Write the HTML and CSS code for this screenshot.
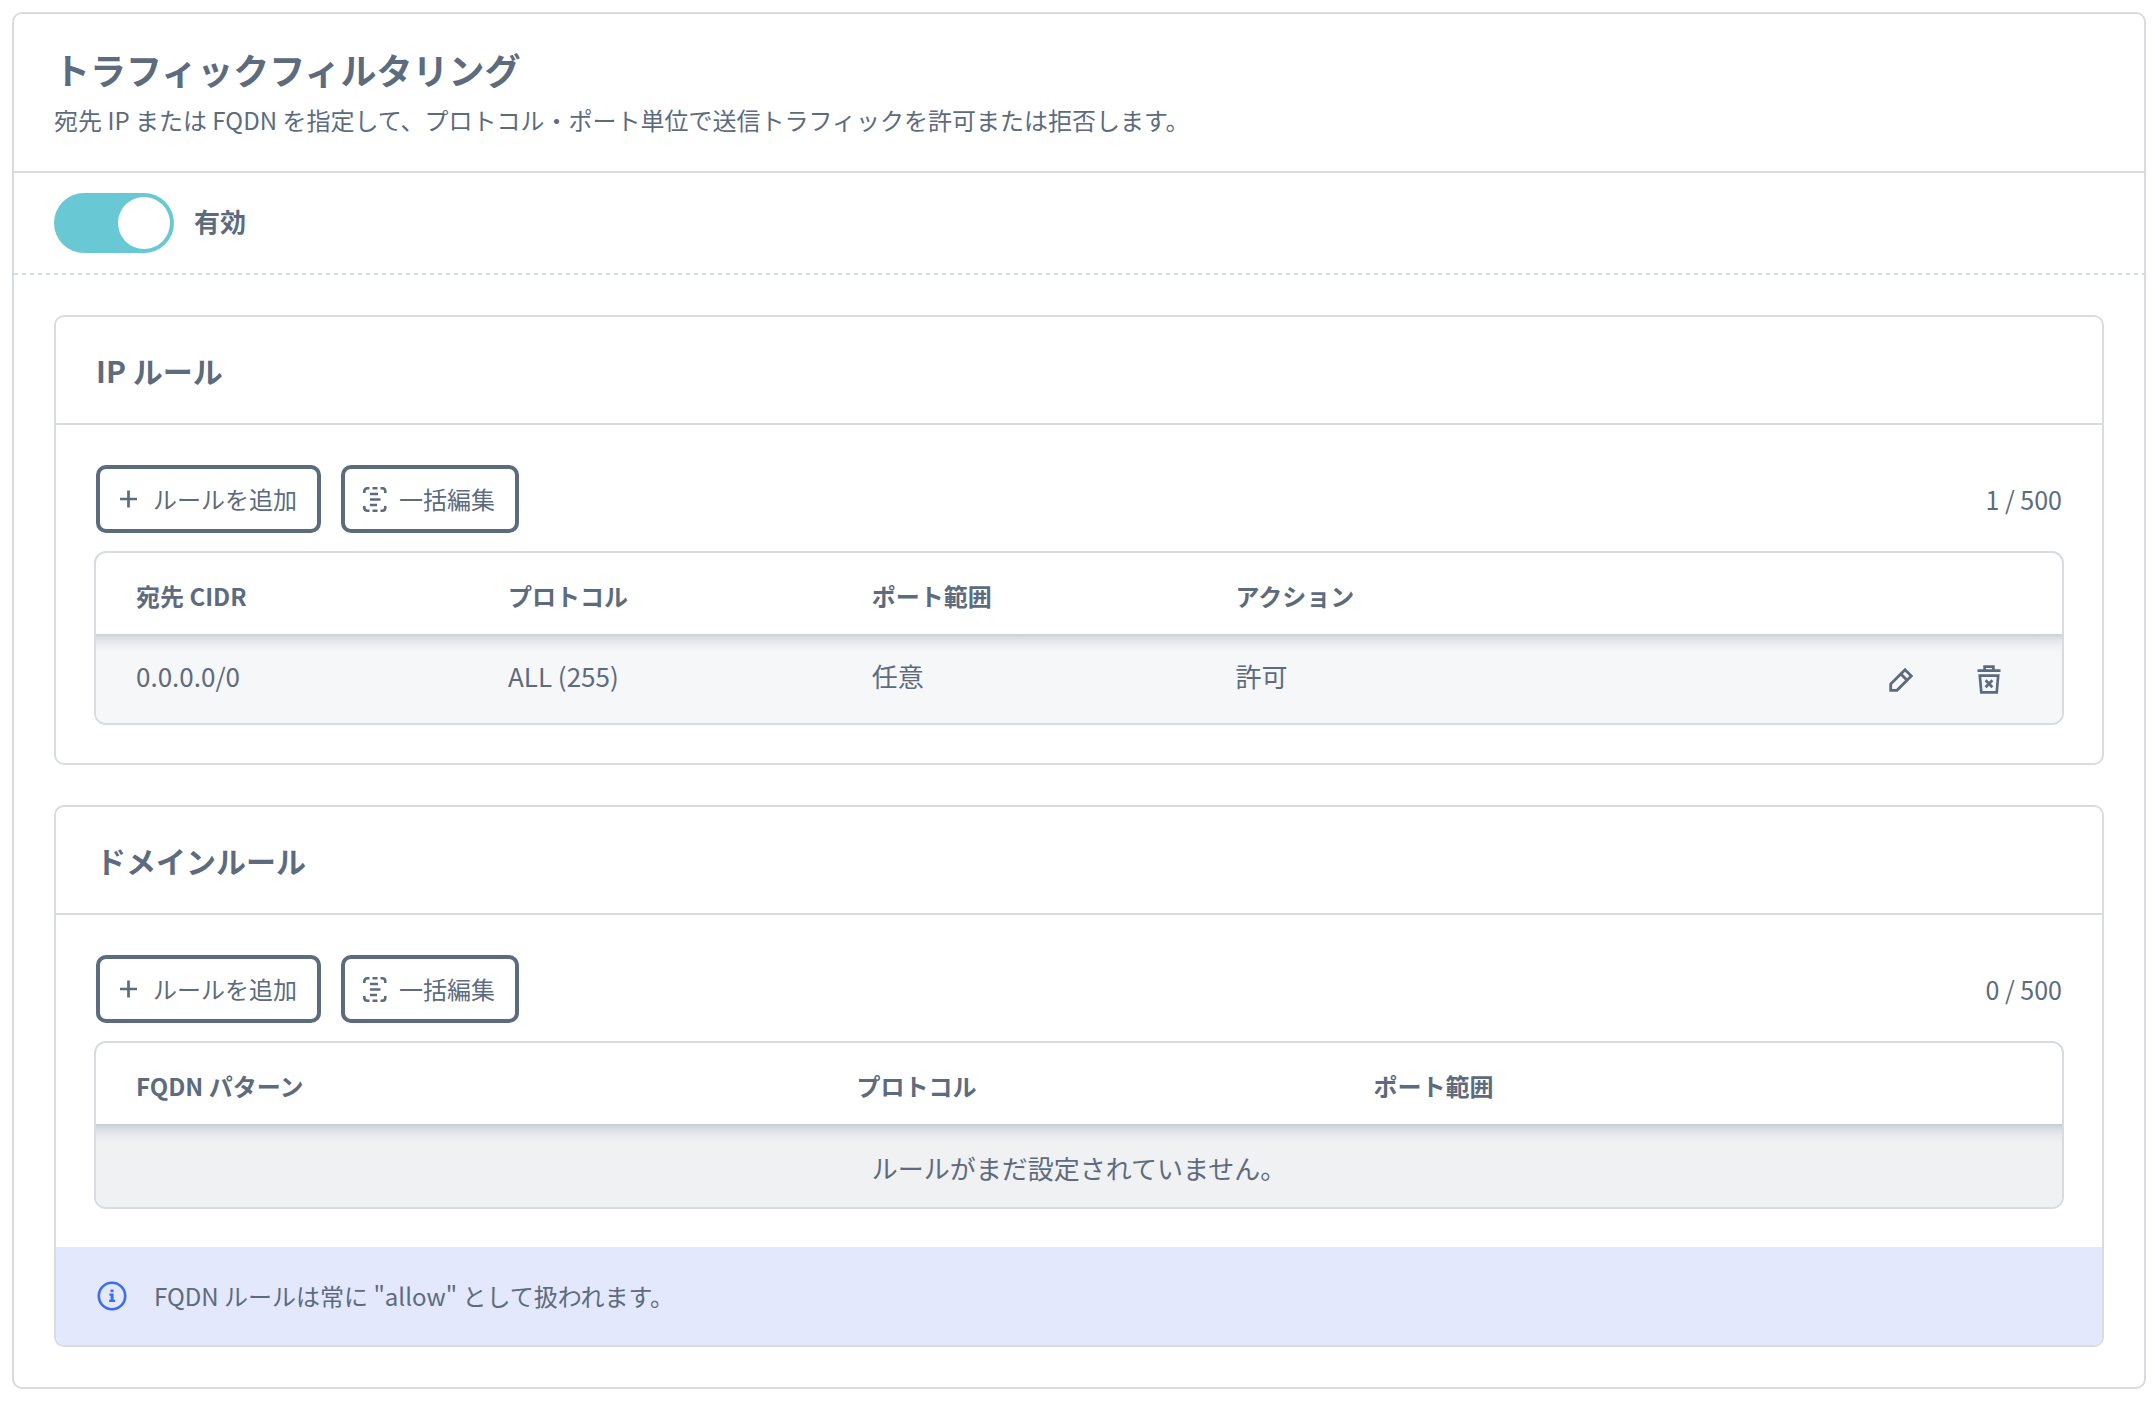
FILE: index.html
```html
<!DOCTYPE html>
<html lang="ja">
<head>
<meta charset="utf-8">
<title>トラフィックフィルタリング</title>
<link rel="stylesheet" href="styles.css">
</head>
<body>

<!-- shared icons -->
<svg class="sprite" aria-hidden="true">
    <symbol id="i-plus" viewBox="0 0 25 28">
        <path d="M4 14h17M12.5 5.5v17" fill="none" stroke="currentColor" stroke-width="2.7"/>
    </symbol>
    <symbol id="i-bulk" viewBox="0 0 26 28">
        <g fill="none" stroke="currentColor" stroke-width="2.6">
            <path d="M3.300 8V6.500Q3.300 3.300 6.500 3.300H8.500M11.500 3.300h5M19.500 3.300H21.500Q24.300 3.300 24.300 6.500V8M3.300 21v1.500q0 3.200 3.200 3.200H8.500M11.500 25.700h5M19.500 25.700H21.500q2.800 0 2.800-3.200V21"/>
            <path d="M9 9h8M9 14.500h10.500M9 20h7"/>
        </g>
    </symbol>
</svg>

<main class="card">
    <header class="card-head">
        <h1>トラフィックフィルタリング</h1>
        <p>宛先 IP または FQDN を指定して、プロトコル・ポート単位で送信トラフィックを許可または拒否します。</p>
    </header>

    <div class="enable">
        <input type="checkbox" class="switch" id="enabled" checked>
        <label for="enabled">有効</label>
    </div>

    <div class="card-body">
        <section class="panel">
            <h2>IP ルール</h2>
            <div class="panel-body">
                <div class="toolbar">
                    <button type="button" class="btn"><svg class="plus"><use href="#i-plus"/></svg>ルールを追加</button>
                    <button type="button" class="btn"><svg class="bulk"><use href="#i-bulk"/></svg>一括編集</button>
                    <span class="count">1 / 500</span>
                </div>
                <div class="table-wrap">
                    <table class="ip-table">
                        <colgroup><col class="c-cidr"><col class="c-proto"><col class="c-port"><col class="c-action"><col class="c-tools"></colgroup>
                        <thead>
                            <tr><th>宛先 CIDR</th><th>プロトコル</th><th>ポート範囲</th><th>アクション</th><th></th></tr>
                        </thead>
                        <tbody>
                            <tr>
                                <td>0.0.0.0/0</td>
                                <td>ALL (255)</td>
                                <td>任意</td>
                                <td>許可</td>
                                <td class="tools">
                                    <div class="tool-list">
                                        <button type="button" class="icon-btn" aria-label="編集">
                                            <svg viewBox="0 0 32 32" fill="none" stroke="currentColor" stroke-width="2.8"><path d="M5.700 26.300V20L20 5.700l6.300 6.300L12 26.300zM15.800 9.900l6.300 6.300"/></svg>
                                        </button>
                                        <button type="button" class="icon-btn" aria-label="削除">
                                            <svg viewBox="0 0 32 32" fill="none" stroke="currentColor" stroke-width="2.7"><path d="M4.500 6.600h23M11.600 6.600V2.700h8.800v3.900M6.800 11.600h18.400l-1.500 16.800H8.300zM12.600 16.300l6.800 7M19.400 16.300l-6.800 7"/></svg>
                                        </button>
                                    </div>
                                </td>
                            </tr>
                        </tbody>
                    </table>
                </div>
            </div>
        </section>

        <section class="panel">
            <h2>ドメインルール</h2>
            <div class="panel-body">
                <div class="toolbar">
                    <button type="button" class="btn"><svg class="plus"><use href="#i-plus"/></svg>ルールを追加</button>
                    <button type="button" class="btn"><svg class="bulk"><use href="#i-bulk"/></svg>一括編集</button>
                    <span class="count">0 / 500</span>
                </div>
                <div class="table-wrap">
                    <table class="domain-table">
                        <colgroup><col class="c-fqdn"><col class="c-dproto"><col></colgroup>
                        <thead>
                            <tr><th>FQDN パターン</th><th>プロトコル</th><th>ポート範囲</th></tr>
                        </thead>
                        <tbody>
                            <tr><td colspan="3" class="empty">ルールがまだ設定されていません。</td></tr>
                        </tbody>
                    </table>
                </div>
            </div>
            <div class="info">
                <svg viewBox="-1 -1 32 32" aria-hidden="true"><circle cx="15" cy="15" r="13.2" fill="none" stroke="currentColor" stroke-width="2.6"/><path d="M13.500 8.600h3v2.600h-3zM12.400 12.600h4.200v6.100h1.500v2.200h-6v-2.200h1.500v-3.900h-1.200z" fill="currentColor"/></svg>
                <p>FQDN ルールは常に "allow" として扱われます。</p>
            </div>
        </section>
    </div>
</main>

</body>
</html>
```
FILE: styles.css
```css
*{box-sizing:border-box;}
body{
    margin:12px 8px 13px 12px;
    background:#fff;
    color:#5d6b7e;
    font-family:"Noto Sans CJK JP",sans-serif;
    font-size:24px;
    line-height:36px;
}
h1,h2,p{margin:0;}
.sprite{display:none;}

.card{border:2px solid #d8dce1;border-radius:10px;}
.card-head{padding:30px 40px 26px;border-bottom:2px solid #d8dce1;}
.card-head h1{font-size:36px;line-height:51px;}
.card-head p{line-height:50px;}

/* on / off switch */
.enable{
    display:flex;
    align-items:center;
    gap:20px;
    padding:20px 40px 22px;
    background:repeating-linear-gradient(90deg,#d3dbe5 0 4px,#fff 4px 8px) bottom/100% 2px no-repeat;
    font-size:26px;
    font-weight:bold;
}
.enable label{padding-bottom:4px;}
.switch{
    appearance:none;
    width:120px;
    height:60px;
    margin:0;
    padding:4px;
    border-radius:30px;
    background:#bcc3cc;
    display:flex;
}
.switch::before{content:"";width:52px;height:52px;border-radius:50%;background:#fff;}
.switch:checked{background:#68c9d5;justify-content:flex-end;}

.card-body{display:flex;flex-direction:column;gap:40px;padding:40px;}
.panel{border:2px solid #d8dce1;border-radius:10px;overflow:hidden;}
.panel h2{
    padding:28px 40px;
    border-bottom:2px solid #d8dce1;
    font-size:30px;
    line-height:50px;
}
.panel-body{padding:40px 38px 38px;}

.toolbar{display:flex;align-items:center;gap:20px;margin-bottom:18px;padding:0 2px;}
.btn{
    display:flex;
    align-items:center;
    gap:12px;
    height:68px;
    padding:0 20px 0 16px;
    border:4px solid #5d6b7e;
    border-radius:10px;
    background:#fff;
    color:inherit;
    font:inherit;
}
.btn svg{height:28px;}
.btn .plus{width:25px;}
.btn .bulk{width:26px;}
.count{margin-left:auto;font-size:25px;}

.table-wrap{border:2px solid #d8dce1;border-radius:12px;overflow:hidden;}
table{width:100%;table-layout:fixed;border-collapse:collapse;}
th{padding:25px 0 20px 40px;text-align:left;}
td{padding:22px 0 27px 40px;font-size:26px;line-height:40px;}
tbody{
    background:linear-gradient(rgba(93,107,126,.28),rgba(93,107,126,.15) 5px,rgba(93,107,126,.05) 12px,rgba(93,107,126,0) 19px) #f6f7f9;
}
.domain-table tbody{background-color:#f0f1f3;}
.c-cidr{width:372px;}
.c-proto,.c-port,.c-action{width:18.5%;}
.c-fqdn{width:36.65%;}
.c-dproto{width:26.3%;}
td.empty{padding:24px 0 19px;text-align:center;}
td.tools{padding:2px 57px 0 0;}
.tool-list{display:flex;justify-content:flex-end;gap:56px;}
.icon-btn{display:flex;padding:0;border:0;background:none;color:inherit;}
.icon-btn svg{width:32px;height:32px;}

.info{display:flex;align-items:center;gap:26px;padding:31px 40px;background:#e3e8fc;}
.info svg{width:32px;height:32px;color:#3b6cf6;}
```
